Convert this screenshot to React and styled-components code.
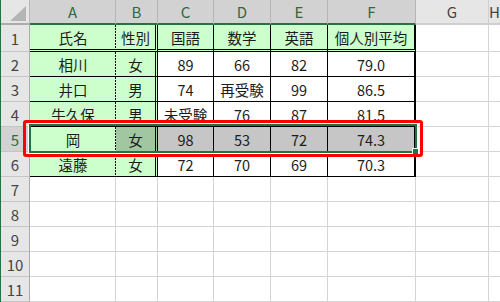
import React from 'react'
import styled, { createGlobalStyle, css } from 'styled-components'

const GREEN = '#ccffcc'
const GRID = '#d4d4d4'

const cols = ['A', 'B', 'C', 'D', 'E', 'F', 'G', 'H']

// table data, rows 1-6
const table = [
  ['氏名', '性別', '国語', '数学', '英語', '個人別平均'],
  ['相川', '女', '89', '66', '82', '79.0'],
  ['井口', '男', '74', '再受験', '99', '86.5'],
  ['牛久保', '男', '未受験', '76', '87', '81.5'],
  ['岡', '女', '98', '53', '72', '74.3'],
  ['遠藤', '女', '72', '70', '69', '70.3'],
]

// right border of each table column
const rightEdge = [
  'none',
  '3px double #000',
  '1px solid #000',
  '1px solid #000',
  '1px solid #000',
  '2px solid #000',
]

function fillFor(r, c) {
  if (r === 4) {
    // selected row: A5 active, the rest shaded
    if (c === 0) return GREEN
    if (c === 1) return '#a0c7a0'
    return '#c6c6c6'
  }
  if (r === 0 || c < 2) return GREEN
  return '#fff'
}

function App() {
  return (
    <>
      <GlobalStyle />
      <Sheet>
        <Corner>
          <svg width="29" height="24" viewBox="0 0 29 24">
            <polygon points="25,6 25,21 9,21" fill="#b5b5b5" />
          </svg>
        </Corner>
        {cols.map((c, i) => (
          <ColHead key={c} $selected={i < 6}>{c}</ColHead>
        ))}

        {Array.from({ length: 11 }).map((_, r) => (
          <React.Fragment key={r}>
            <RowHead $selected={r === 4}>{r + 1}</RowHead>
            {cols.map((c, ci) => {
              const inTable = r < 6 && ci < 6
              if (!inTable) return <Cell key={c} />
              return (
                <Cell
                  key={c}
                  $fill={fillFor(r, ci)}
                  $right={rightEdge[ci]}
                  $bottom={r === 0 ? '3px double #000' : '1px solid #000'}
                  $dashed={ci === 0}
                >
                  {table[r][ci]}
                </Cell>
              )
            })}
          </React.Fragment>
        ))}

        <Selection>
          <FillHandle />
        </Selection>
        <Callout />
      </Sheet>
    </>
  )
}

export default App

const GlobalStyle = createGlobalStyle`
  body {
    margin: 0;
    background: #fff;
    font-family: "Noto Sans CJK JP", "Noto Sans", sans-serif;
  }
`

const Sheet = styled.div`
  position: relative;
  width: 499px;
  height: 302px;
  overflow: hidden;
  border-left: 1px solid #217346;
  display: grid;
  grid-template-columns: 29px 86px 42px 56px 57px 57px 88px 73px 1fr;
  grid-template-rows: 25px 27px repeat(10, 25px);
`

const Corner = styled.div`
  box-sizing: border-box;
  background: #e6e6e6;
  border-right: 1px solid #b8b8b8;
  border-bottom: 2px solid #ababab;
  svg {
    display: block;
  }
`

const ColHead = styled.div`
  box-sizing: border-box;
  display: flex;
  align-items: center;
  justify-content: center;
  font-size: 15px;
  padding-bottom: 1px;
  background: ${p => (p.$selected ? '#d2d2d2' : '#e6e6e6')};
  color: ${p => (p.$selected ? '#2a6a45' : '#444')};
  border-right: 1px solid ${p => (p.$selected ? '#b5b5b5' : '#cfcfcf')};
  border-bottom: 2px solid ${p => (p.$selected ? '#217346' : '#cfcfcf')};
`

const RowHead = styled.div`
  box-sizing: border-box;
  display: flex;
  align-items: center;
  justify-content: center;
  font-size: 15px;
  background: ${p => (p.$selected ? '#d2d2d2' : '#e6e6e6')};
  color: ${p => (p.$selected ? '#2a6a45' : '#444')};
  border-right: 1px solid #ababab;
  border-bottom: 1px solid #c4c4c4;
`

const Cell = styled.div`
  box-sizing: border-box;
  display: flex;
  align-items: center;
  justify-content: center;
  padding-top: 1px;
  white-space: nowrap;
  font-size: 14.5px;
  color: #1c1c1c;
  background-color: ${p => p.$fill || '#fff'};
  border-right: ${p => p.$right || `1px solid ${GRID}`};
  border-bottom: ${p => p.$bottom || `1px solid ${GRID}`};

  ${p =>
    p.$dashed &&
    css`
      background-image: repeating-linear-gradient(
        to bottom,
        #000 0 2px,
        transparent 2px 3px
      );
      background-size: 1px 100%;
      background-position: right top;
      background-repeat: no-repeat;
    `}
`

const Selection = styled.div`
  position: absolute;
  left: 28px;
  top: 124px;
  width: 388px;
  height: 29px;
  box-sizing: border-box;
  border: 2px solid #217346;
  box-shadow: 0 0 0 1px #fff;
`

const FillHandle = styled.div`
  position: absolute;
  right: -4px;
  bottom: -4px;
  width: 5px;
  height: 5px;
  background: #217346;
  border: 1px solid #fff;
`

const Callout = styled.div`
  position: absolute;
  left: 22px;
  top: 120px;
  width: 400px;
  height: 37px;
  box-sizing: border-box;
  border: 3px solid #ff0000;
  border-radius: 3px;
`
